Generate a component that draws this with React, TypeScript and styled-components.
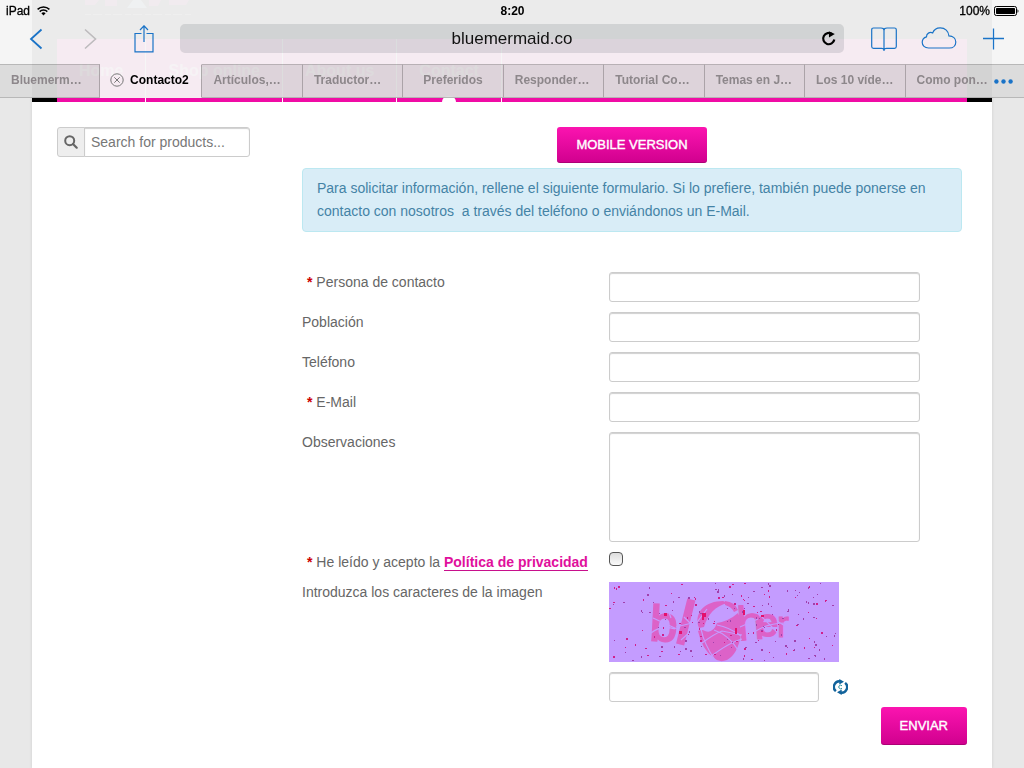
import React from 'react';
import styled, { createGlobalStyle } from 'styled-components';

const GlobalStyle = createGlobalStyle`
  *, *::before, *::after { box-sizing: border-box; }
  body {
    margin: 0;
    background: #e8e8e8;
    color: #666;
    font-family: "Liberation Sans", Arial, sans-serif;
    font-size: 14px;
    line-height: 20px;
  }
  button, input, textarea { font: inherit; margin: 0; }
`;

/* ---------- browser chrome ---------- */

const Chrome = styled.header`
  position: fixed;
  inset: 0 0 auto 0;
  z-index: 10;
  background: rgba(246, 246, 246, 0.957);
  color: #000;
`;

const StatusBar = styled.div`
  display: grid;
  grid-template-columns: 1fr auto 1fr;
  align-items: center;
  height: 22px;
  padding: 0 5px 0 6px;
  font-size: 12px;
  -webkit-text-stroke: 0.3px #000;
`;

const StatusGroup = styled.div<{ $end?: boolean }>`
  display: flex;
  align-items: center;
  gap: ${p => (p.$end ? 4 : 7)}px;
  justify-content: ${p => (p.$end ? 'flex-end' : 'flex-start')};
`;

const Clock = styled.time`
  font-weight: bold;
  -webkit-text-stroke: 0;
`;

const Toolbar = styled.div`
  display: flex;
  align-items: flex-start;
  height: 42px;
  padding: 2px 3px 0 9px;
`;

const ToolButton = styled.button<{ $wide?: boolean }>`
  display: flex;
  align-items: center;
  justify-content: center;
  flex: none;
  width: ${p => (p.$wide ? 55 : 54)}px;
  height: 29px;
  padding: 0;
  border: 0;
  background: none;
  color: #1a73c7;
  &:disabled { color: #bdbbbd; }
`;

const AddressBar = styled.div`
  display: flex;
  flex: 1;
  align-items: center;
  height: 29px;
  margin: 0 12px 0 9px;
  padding-left: 30px;
  border-radius: 5px;
  background: rgba(0, 20, 26, 0.11);
`;

const AddressInput = styled.input`
  flex: 1;
  min-width: 0;
  padding: 0;
  border: 0;
  outline: 0;
  background: none;
  color: #111;
  font-size: 17px;
  line-height: 28px;
  text-align: center;
`;

const ReloadButton = styled.button`
  display: flex;
  align-items: center;
  justify-content: center;
  width: 30px;
  height: 29px;
  padding: 0;
  border: 0;
  background: none;
`;

const TabStrip = styled.nav`
  display: flex;
  height: 34px;
`;

const Tab = styled.button<{ $active?: boolean; $clipped?: boolean }>`
  display: flex;
  align-items: center;
  justify-content: ${p => (p.$clipped ? 'flex-start' : 'center')};
  gap: 6px;
  flex: ${p => (p.$active ? '0 0 102px' : '1 1 0')};
  min-width: 0;
  padding: 0 11px 2px ${p => (p.$active ? 8 : 11)}px;
  white-space: nowrap;
  border: 0;
  border-right: 1px solid rgba(0, 0, 0, 0.3);
  border-top: 1px solid ${p => (p.$active ? 'transparent' : 'rgba(0, 0, 0, 0.25)')};
  border-bottom: 1px solid ${p => (p.$active ? 'transparent' : 'rgba(0, 0, 0, 0.25)')};
  background: ${p => (p.$active ? 'transparent' : 'rgba(0, 0, 0, 0.1)')};
  background-clip: padding-box;
  color: ${p => (p.$active ? '#000' : '#8d878b')};
  font-size: 12px;
  font-weight: bold;
  svg { flex: none; }
  &:last-of-type { border-right: 0; }
`;

const MoreArea = styled.div`
  display: flex;
  flex: 0 0 19px;
  justify-content: flex-end;
  min-width: 0;
  border-top: 1px solid rgba(0, 0, 0, 0.25);
  border-bottom: 1px solid rgba(0, 0, 0, 0.25);
  background: rgba(0, 0, 0, 0.1);
  background-clip: padding-box;
`;

const MoreButton = styled.button`
  display: flex;
  align-items: center;
  justify-content: center;
  flex: 0 0 40px;
  padding: 0;
  border: 0;
  background: none;
  color: #1a73c7;
`;

/* ---------- web page ---------- */

const Page = styled.div`
  max-width: 960px;
  min-height: 100vh;
  margin: 0 auto;
  background: #fff;
  box-shadow: 0 0 3px rgba(0, 0, 0, 0.12);
`;

const SiteHeader = styled.header`
  height: 102px;
  padding: 0 25px;
  background: #000;
`;

const LogoRow = styled.div`
  height: 39px;
  padding-left: 20px;
  opacity: 0.6;
`;

const SiteNav = styled.nav`
  display: flex;
  height: 63px;
  background: #f00ca5;
`;

const NavLink = styled.a<{ $current?: boolean }>`
  display: flex;
  flex-direction: column;
  align-items: center;
  justify-content: space-between;
  padding: 22px 22px 0;
  border-right: 1px solid #fff;
  color: rgba(255, 255, 255, 0.7);
  font-size: 16px;
  font-weight: bold;
  text-decoration: none;
  &::after {
    content: "";
    visibility: ${p => (p.$current ? 'visible' : 'hidden')};
    width: 14px;
    height: 6px;
    border-radius: 7px 7px 0 0;
    background: #fff;
  }
`;

const Content = styled.div`
  display: flex;
  padding: 25px 25px 23px;
`;

const Sidebar = styled.aside`
  flex: 0 0 245px;
`;

const SearchBox = styled.form`
  display: flex;
  width: 193px;
  height: 30px;
`;

const SearchButton = styled.button`
  display: flex;
  align-items: center;
  justify-content: center;
  width: 28px;
  padding: 0;
  border: 1px solid #ccc;
  border-radius: 3px 0 0 3px;
  background: #eee;
`;

const fieldLook = `
  border: 1px solid #ccc;
  border-radius: 3px;
  background: #fff;
  box-shadow: inset 0 1px 1px #d0d0d0;
  color: #555;
  outline: 0;
`;

const SearchInput = styled.input`
  ${fieldLook}
  flex: 1;
  min-width: 0;
  margin-left: -1px;
  padding: 0 6px;
  border-radius: 0 3px 3px 0;
  &::placeholder { color: #777; opacity: 1; }
`;

const Main = styled.main`
  flex: 1;
  min-width: 0;
`;

const PinkButton = styled.button`
  height: ${p => (p.type === 'submit' ? 38 : 36)}px;
  padding: 0 19px;
  border: 0;
  border-radius: 3px;
  background: linear-gradient(#fb14b0, #d0008e);
  box-shadow: inset 0 -1px 0 rgba(120, 0, 80, 0.4);
  color: #fff;
  font-size: 13px;
  -webkit-text-stroke: 0.4px #fff;
`;

const Centered = styled.div`
  display: flex;
  justify-content: center;
  margin: 0 5px 5px 0;
`;

const Notice = styled.p`
  margin: 0 5px 40px 0;
  padding: 8px 30px 8px 14px;
  border: 1px solid #bce8f1;
  border-radius: 4px;
  background: #d9edf7;
  color: #4483a6;
  line-height: 23px;
`;

const ContactForm = styled.form`
  display: flex;
  flex-direction: column;
  gap: 10px;
`;

const Row = styled.div`
  display: grid;
  grid-template-columns: 307px minmax(0, 311px);
  align-items: start;
`;

const Label = styled.label<{ $required?: boolean }>`
  padding-left: ${p => (p.$required ? 5 : 0)}px;
`;

const Star = styled.span`
  color: #c00;
  font-weight: bold;
`;

const TextField = styled.input`
  ${fieldLook}
  width: 100%;
  height: 30px;
  padding: 4px 6px;
`;

const TextArea = styled.textarea`
  ${fieldLook}
  display: block;
  width: 100%;
  height: 110px;
  padding: 4px 6px;
  resize: none;
`;

const PolicyLink = styled.a`
  border-bottom: 1px solid #c8108c;
  color: #e0109c;
  font-weight: bold;
  text-decoration: none;
`;

const CheckBox = styled.input`
  appearance: none;
  display: block;
  width: 14px;
  height: 14px;
  border: 1px solid #555;
  border-radius: 4px;
  background: linear-gradient(#ddd, #fafafa);
  &:checked { background: #e0109c; }
`;

const CaptchaBlock = styled.div`
  display: flex;
  flex-direction: column;
  gap: 10px;
  svg { display: block; }
`;

const CaptchaEntry = styled.div`
  display: grid;
  grid-template-columns: 210px auto;
  justify-content: start;
  align-items: center;
  gap: 14px;
`;

const RefreshButton = styled.button`
  padding: 0;
  border: 0;
  background: none;
`;

const Actions = styled.div`
  display: flex;
  justify-content: flex-end;
  margin-top: -5px;
`;

/* ---------- drawings ---------- */

const WifiIcon = () => (
  <svg width="13" height="10" viewBox="0 0 13 10" fill="none" stroke="#000" strokeWidth="1.5">
    <path d="M.6 3.4a8.5 8.5 0 0 1 11.8 0M2.7 5.6a5.5 5.5 0 0 1 7.6 0" />
    <path d="M4.4 7.3a3 3 0 0 1 4.2 0L6.5 9.5z" fill="#000" stroke="none" />
  </svg>
);

const BatteryIcon = () => (
  <svg width="25" height="10" viewBox="0 0 25 10">
    <rect x=".5" y=".5" width="22" height="9" rx="1.8" fill="none" stroke="#000" />
    <rect x="2" y="2" width="19" height="6" rx=".7" />
    <path d="M23.5 3.2c1.3.4 1.3 3.2 0 3.6z" />
  </svg>
);

const Chevron = ({ forward }: { forward?: boolean }) => (
  <svg width="14" height="22" viewBox="0 0 14 22" fill="none" stroke="currentColor" strokeWidth={forward ? 1.6 : 1.8}>
    <path d={forward ? 'M2 1.5 12.5 11 2 20.5' : 'M12.5 1.5 2 11l10.5 9.5'} />
  </svg>
);

const ShareIcon = () => (
  <svg width="20" height="28" viewBox="0 0 20 28" fill="none" stroke="currentColor" strokeWidth="1.2">
    <path d="M7.5 8.5H1v18.3h18V8.5h-6.5M10 17V1M6 5l4-4.2L14 5" />
  </svg>
);

const ReloadIcon = () => (
  <svg width="16" height="17" viewBox="0 0 16 17">
    <path d="M11.2 4.2A5.6 5.6 0 1 0 13.3 9.5" fill="none" stroke="#000" strokeWidth="2.2" />
    <path d="M7.8 1.2 13.8 4 8 7.4z" />
  </svg>
);

const BookIcon = () => (
  <svg width="26" height="26" viewBox="0 0 26 26" fill="none" stroke="currentColor" strokeWidth="1.2">
    <path d="M13 25V4.5C13 2.6 12 2 10 2H2.5Q.7 2 .7 3.8V20.5Q.7 22.3 2.5 22.3H10.5Q13 22.3 13 24.2M13 4.5C13 2.6 14 2 16 2h7.5q1.8 0 1.8 1.8v16.7q0 1.8-1.8 1.8H15.5Q13 22.3 13 24.2" />
  </svg>
);

const CloudIcon = () => (
  <svg width="36" height="24" viewBox="0 0 36 24" fill="none" stroke="currentColor" strokeWidth="1.2">
    <path d="M7.5 21C3.8 21 1.2 18.6 1.2 15.3c0-2.7 1.7-4.8 4.3-5.5-.1-3.2 3.2-5.3 6.2-3.9C12.8 2.8 15.7.8 19.2.8c4.9 0 8.4 3.5 8.7 8 4.1.1 6.9 2.7 6.9 6.1 0 3.6-2.7 6.1-6.3 6.1z" />
  </svg>
);

const PlusIcon = () => (
  <svg width="22" height="22" viewBox="0 0 22 22" stroke="currentColor" strokeWidth="1.3">
    <path d="M10.5 .5v21M0 10.5h21" />
  </svg>
);

const CloseIcon = () => (
  <svg width="14" height="14" viewBox="0 0 14 14" fill="none" stroke="#777">
    <circle cx="7" cy="7" r="6.2" />
    <path d="m4.3 4.3 5.4 5.4m0-5.4L4.3 9.7" />
  </svg>
);

const DotsIcon = () => (
  <svg width="19" height="5" viewBox="0 0 19 5" fill="currentColor">
    <circle cx="2.4" cy="2.5" r="2.2" />
    <circle cx="9.5" cy="2.5" r="2.2" />
    <circle cx="16.6" cy="2.5" r="2.2" />
  </svg>
);

const SearchIcon = () => (
  <svg width="14" height="14" viewBox="0 0 14 14" fill="none" stroke="#666">
    <circle cx="5.7" cy="5.7" r="4.5" strokeWidth="2" />
    <path d="m9 9 3.7 3.7" strokeWidth="2.2" strokeLinecap="round" />
  </svg>
);

const RefreshIcon = () => (
  <svg width="15" height="16" viewBox="0 0 15 16" fill="none" stroke="#12639b" strokeWidth="2.4">
    <path d="M2.9 12.2A5.6 5.6 0 0 1 7.5 2.4" />
    <path d="M12.1 3.8A5.6 5.6 0 0 1 7.5 13.6" />
    <path d="M6.3 0 11 2.8 6.3 5.6zM8.7 10.4 4 13.2 8.7 16z" fill="#12639b" stroke="none" />
    <path d="M9 6.9a1.8 1.8 0 1 0 0 2.2" stroke="#2a8f9d" strokeWidth="1" />
  </svg>
);

const SiteLogo = () => (
  <svg width="120" height="18" viewBox="0 0 120 18" fill="#f00ca5">
    <path d="M8 0h14l-4 5h-10zM28 0h12v6H28zM72 0h12l-3 6h-9zM92 0h20l-3 5H92z" />
    <path d="m50 8 6-8h8l6 8z" fill="#aef" />
    <path d="M8 14.5h106" stroke="#fff" strokeWidth="1" strokeDasharray="6 2 9 3" opacity=".6" />
  </svg>
);

/* Repeatable noise for the captcha background. */
const specks = (() => {
  let seed = 71;
  const next = () => {
    seed = (seed * 16807) % 2147483647;
    return seed / 2147483647;
  };
  return Array.from({ length: 190 }, () => ({
    x: Math.floor(next() * 229),
    y: Math.floor(next() * 79),
    w: next() > 0.6 ? 2 : 1,
    h: next() > 0.6 ? 2 : 1,
    hot: next() > 0.5,
  }));
})();

const CaptchaImage = () => (
  <svg width="230" height="80" viewBox="0 0 230 80" role="img" aria-label="Captcha">
    <rect width="230" height="80" fill="#c49cff" />
    <g fill="#dc62c8" stroke="#dc62c8" fontFamily="Liberation Sans, Arial, sans-serif">
      <text x="41" y="59" fontSize="50" strokeWidth="2" transform="rotate(3 55 40)">b</text>
      <text x="70" y="62" fontSize="60" strokeWidth="3" transform="rotate(14 78 40)">l</text>
      <text x="128" y="58" fontSize="48" strokeWidth="1" transform="rotate(-5 136 40)">h</text>
      <text x="148" y="54" fontSize="38" strokeWidth="2">e</text>
      <text x="168" y="55" fontSize="36" strokeWidth="1">r</text>
    </g>
    <path d="M90 46C84 30 97 19 114 19l5 2C106 24 99 32 95 45z" fill="#dc62c8" />
    <path d="M116 19q10 1 13 9l-4 2q-2-5-9-7z" fill="#dc62c8" />
    <path d="M89 49q4-2 7 0 8 3 12-8 12-2 21-10 5 11 3 21-3 20-14 26-8 3-13-2-12-8-16-27z" fill="#dc62c8" />
    <g fill="none" stroke="#c49cff" strokeWidth="1.2">
      <path d="M42 51q10-8 24-4M44 36l24 11M57 22l5 14M67 45l20-5M72 58l9-8M75 35l8 8" />
      <path d="M92 47q3 15 14 31M93 61q12-9 20-12l20 4M101 75q20-15 32-18M105 48q15 5 24 20" />
      <path d="M108 43q12 2 24 11M86 43l12-16" />
      <path d="M131 45l18-8M147 49q12-8 30-8M151 33l17 17M168 39l13 8" />
    </g>
    {specks.map((s, i) => (
      <rect key={i} x={s.x} y={s.y} width={s.w} height={s.h} fill={s.hot ? '#d0208c' : '#a040ac'} />
    ))}
    <path d="M93 31h4v4h-2v3h-2zM55 31h3v3h-3zM126 46h2v6h-2zM152 33h3v2h-3zM70 49h3v3h-3zM134 28h2v5h-2z" fill="#e4106c" />
  </svg>
);

/* ---------- composition ---------- */

const tabs = ['Bluemerm…', 'Contacto2', 'Artículos,…', 'Traductor…', 'Preferidos', 'Responder…', 'Tutorial Co…', 'Temas en J…', 'Los 10 víde…', 'Como pon…'];

const BrowserChrome = () => (
  <Chrome>
    <StatusBar>
      <StatusGroup><span>iPad</span><WifiIcon /></StatusGroup>
      <Clock>8:20</Clock>
      <StatusGroup $end><span>100%</span><BatteryIcon /></StatusGroup>
    </StatusBar>
    <Toolbar>
      <ToolButton aria-label="Back"><Chevron /></ToolButton>
      <ToolButton aria-label="Forward" disabled><Chevron forward /></ToolButton>
      <ToolButton aria-label="Share"><ShareIcon /></ToolButton>
      <AddressBar>
        <AddressInput type="text" aria-label="Address" defaultValue="bluemermaid.co" />
        <ReloadButton aria-label="Reload"><ReloadIcon /></ReloadButton>
      </AddressBar>
      <ToolButton $wide aria-label="Bookmarks"><BookIcon /></ToolButton>
      <ToolButton $wide aria-label="iCloud tabs"><CloudIcon /></ToolButton>
      <ToolButton $wide aria-label="New tab"><PlusIcon /></ToolButton>
    </Toolbar>
    <TabStrip>
      {tabs.map((name, i) => (
        <Tab key={name} $active={i === 1} $clipped={name.endsWith('…')}>
          {i === 1 && <CloseIcon />}
          <span>{name}</span>
        </Tab>
      ))}
      <MoreArea>
        <MoreButton aria-label="More tabs"><DotsIcon /></MoreButton>
      </MoreArea>
    </TabStrip>
  </Chrome>
);

const Caption = ({ id, required, children }: { id: string; required?: boolean; children: React.ReactNode }) => (
  <Label htmlFor={id} $required={required}>
    {required && <><Star>*</Star>{' '}</>}
    {children}
  </Label>
);

export default function App() {
  return (
    <>
      <GlobalStyle />
      <BrowserChrome />
      <Page>
        <SiteHeader>
          <LogoRow><SiteLogo /></LogoRow>
          <SiteNav>
            <NavLink href="#home">Home</NavLink>
            <NavLink href="#shop">Shop online</NavLink>
            <NavLink href="#about">About us</NavLink>
            <NavLink href="#contact" $current>Contact</NavLink>
          </SiteNav>
        </SiteHeader>
        <Content>
          <Sidebar>
            <SearchBox role="search">
              <SearchButton type="button" aria-label="Search"><SearchIcon /></SearchButton>
              <SearchInput type="text" aria-label="Search for products" placeholder="Search for products..." />
            </SearchBox>
          </Sidebar>
          <Main>
            <Centered><PinkButton type="button">MOBILE VERSION</PinkButton></Centered>
            <Notice>
              Para solicitar información, rellene el siguiente formulario. Si lo prefiere, también puede ponerse en
              contacto con nosotros{'\u00a0 '}a través del teléfono o enviándonos un E-Mail.
            </Notice>
            <ContactForm>
              <Row><Caption id="persona" required>Persona de contacto</Caption><TextField id="persona" type="text" /></Row>
              <Row><Caption id="poblacion">Población</Caption><TextField id="poblacion" type="text" /></Row>
              <Row><Caption id="telefono">Teléfono</Caption><TextField id="telefono" type="tel" /></Row>
              <Row><Caption id="email" required>E-Mail</Caption><TextField id="email" type="email" /></Row>
              <Row><Caption id="observaciones">Observaciones</Caption><TextArea id="observaciones" /></Row>
              <Row>
                <Caption id="acepto" required>
                  He leído y acepto la <PolicyLink href="#privacidad">Política de privacidad</PolicyLink>
                </Caption>
                <CheckBox id="acepto" type="checkbox" />
              </Row>
              <Row>
                <Caption id="captcha">Introduzca los caracteres de la imagen</Caption>
                <CaptchaBlock>
                  <CaptchaImage />
                  <CaptchaEntry>
                    <TextField id="captcha" type="text" />
                    <RefreshButton type="button" aria-label="Recargar imagen"><RefreshIcon /></RefreshButton>
                  </CaptchaEntry>
                </CaptchaBlock>
              </Row>
              <Actions><PinkButton type="submit">ENVIAR</PinkButton></Actions>
            </ContactForm>
          </Main>
        </Content>
      </Page>
    </>
  );
}
